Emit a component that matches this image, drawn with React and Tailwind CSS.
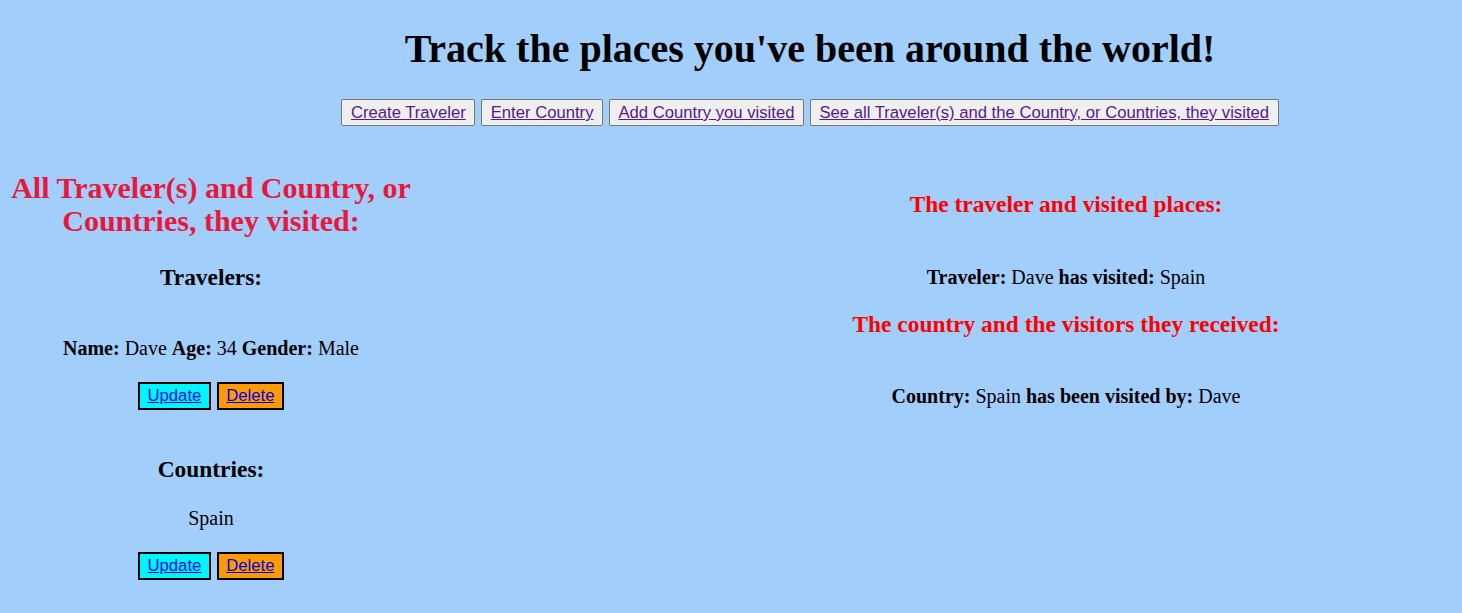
export default function App() {
  const navItems = [
    'Create Traveler',
    'Enter Country',
    'Add Country you visited',
    'See all Traveler(s) and the Country, or Countries, they visited',
  ]

  const ActionButtons = () => (
    <div className="flex justify-center gap-[6px] font-['Liberation_Sans',Arial,sans-serif] text-[16.67px]">
      <button className="border-2 border-black bg-[#00f6ff] px-[7.5px] py-[2px] leading-[20px] text-[#0000ee] underline">
        Update
      </button>
      <button className="border-2 border-black bg-[#ff9a00] px-[7.5px] py-[2px] leading-[20px] text-[#0000ee] underline">
        Delete
      </button>
    </div>
  )

  return (
    <div className="min-h-screen bg-[#a2cefc] font-['Liberation_Serif','Times_New_Roman',serif] text-[20px] text-black">
      <header className="pl-[158px] text-center">
        <h1 className="pt-[26px] text-[40px] font-bold leading-[46px]">
          Track the places you've been around the world!
        </h1>
        <nav className="mt-[27px] flex justify-center gap-[6px] font-['Liberation_Sans',Arial,sans-serif] text-[16.67px]">
          {navItems.map((item) => (
            <button
              key={item}
              className="rounded-[2px] border border-[#767676] bg-[#efefef] px-[8.5px] py-[3px] leading-[19px] text-[#551a8b] underline"
            >
              {item}
            </button>
          ))}
        </nav>
      </header>

      <main className="flex">
        <section className="w-[422px] text-center">
          <h2 className="mt-[45px] text-[30px] font-bold leading-[33px] text-[#e8183c]">
            All Traveler(s) and Country, or Countries, they visited:
          </h2>
          <h3 className="mt-[27px] text-[23.4px] font-bold leading-[26px]">Travelers:</h3>
          <p className="mt-[47px] leading-[22px]">
            <b>Name:</b> Dave <b>Age:</b> 34 <b>Gender:</b> Male
          </p>
          <div className="mt-[23px]">
            <ActionButtons />
          </div>
          <h3 className="mt-[46px] text-[23.4px] font-bold leading-[26px]">Countries:</h3>
          <p className="mt-[25px] leading-[22px]">Spain</p>
          <div className="mt-[23px]">
            <ActionButtons />
          </div>
        </section>

        <section className="ml-auto w-[792px] text-center">
          <h3 className="mt-[64px] text-[23.4px] font-bold leading-[28px] text-[#ff0000]">
            The traveler and visited places:
          </h3>
          <p className="mt-[48px] leading-[22px]">
            <b>Traveler:</b> Dave <b>has visited:</b> Spain
          </p>
          <h3 className="mt-[22px] text-[23.4px] font-bold leading-[28px] text-[#ff0000]">
            The country and the visitors they received:
          </h3>
          <p className="mt-[47px] leading-[22px]">
            <b>Country:</b> Spain <b>has been visited by:</b> Dave
          </p>
        </section>
      </main>
    </div>
  )
}
